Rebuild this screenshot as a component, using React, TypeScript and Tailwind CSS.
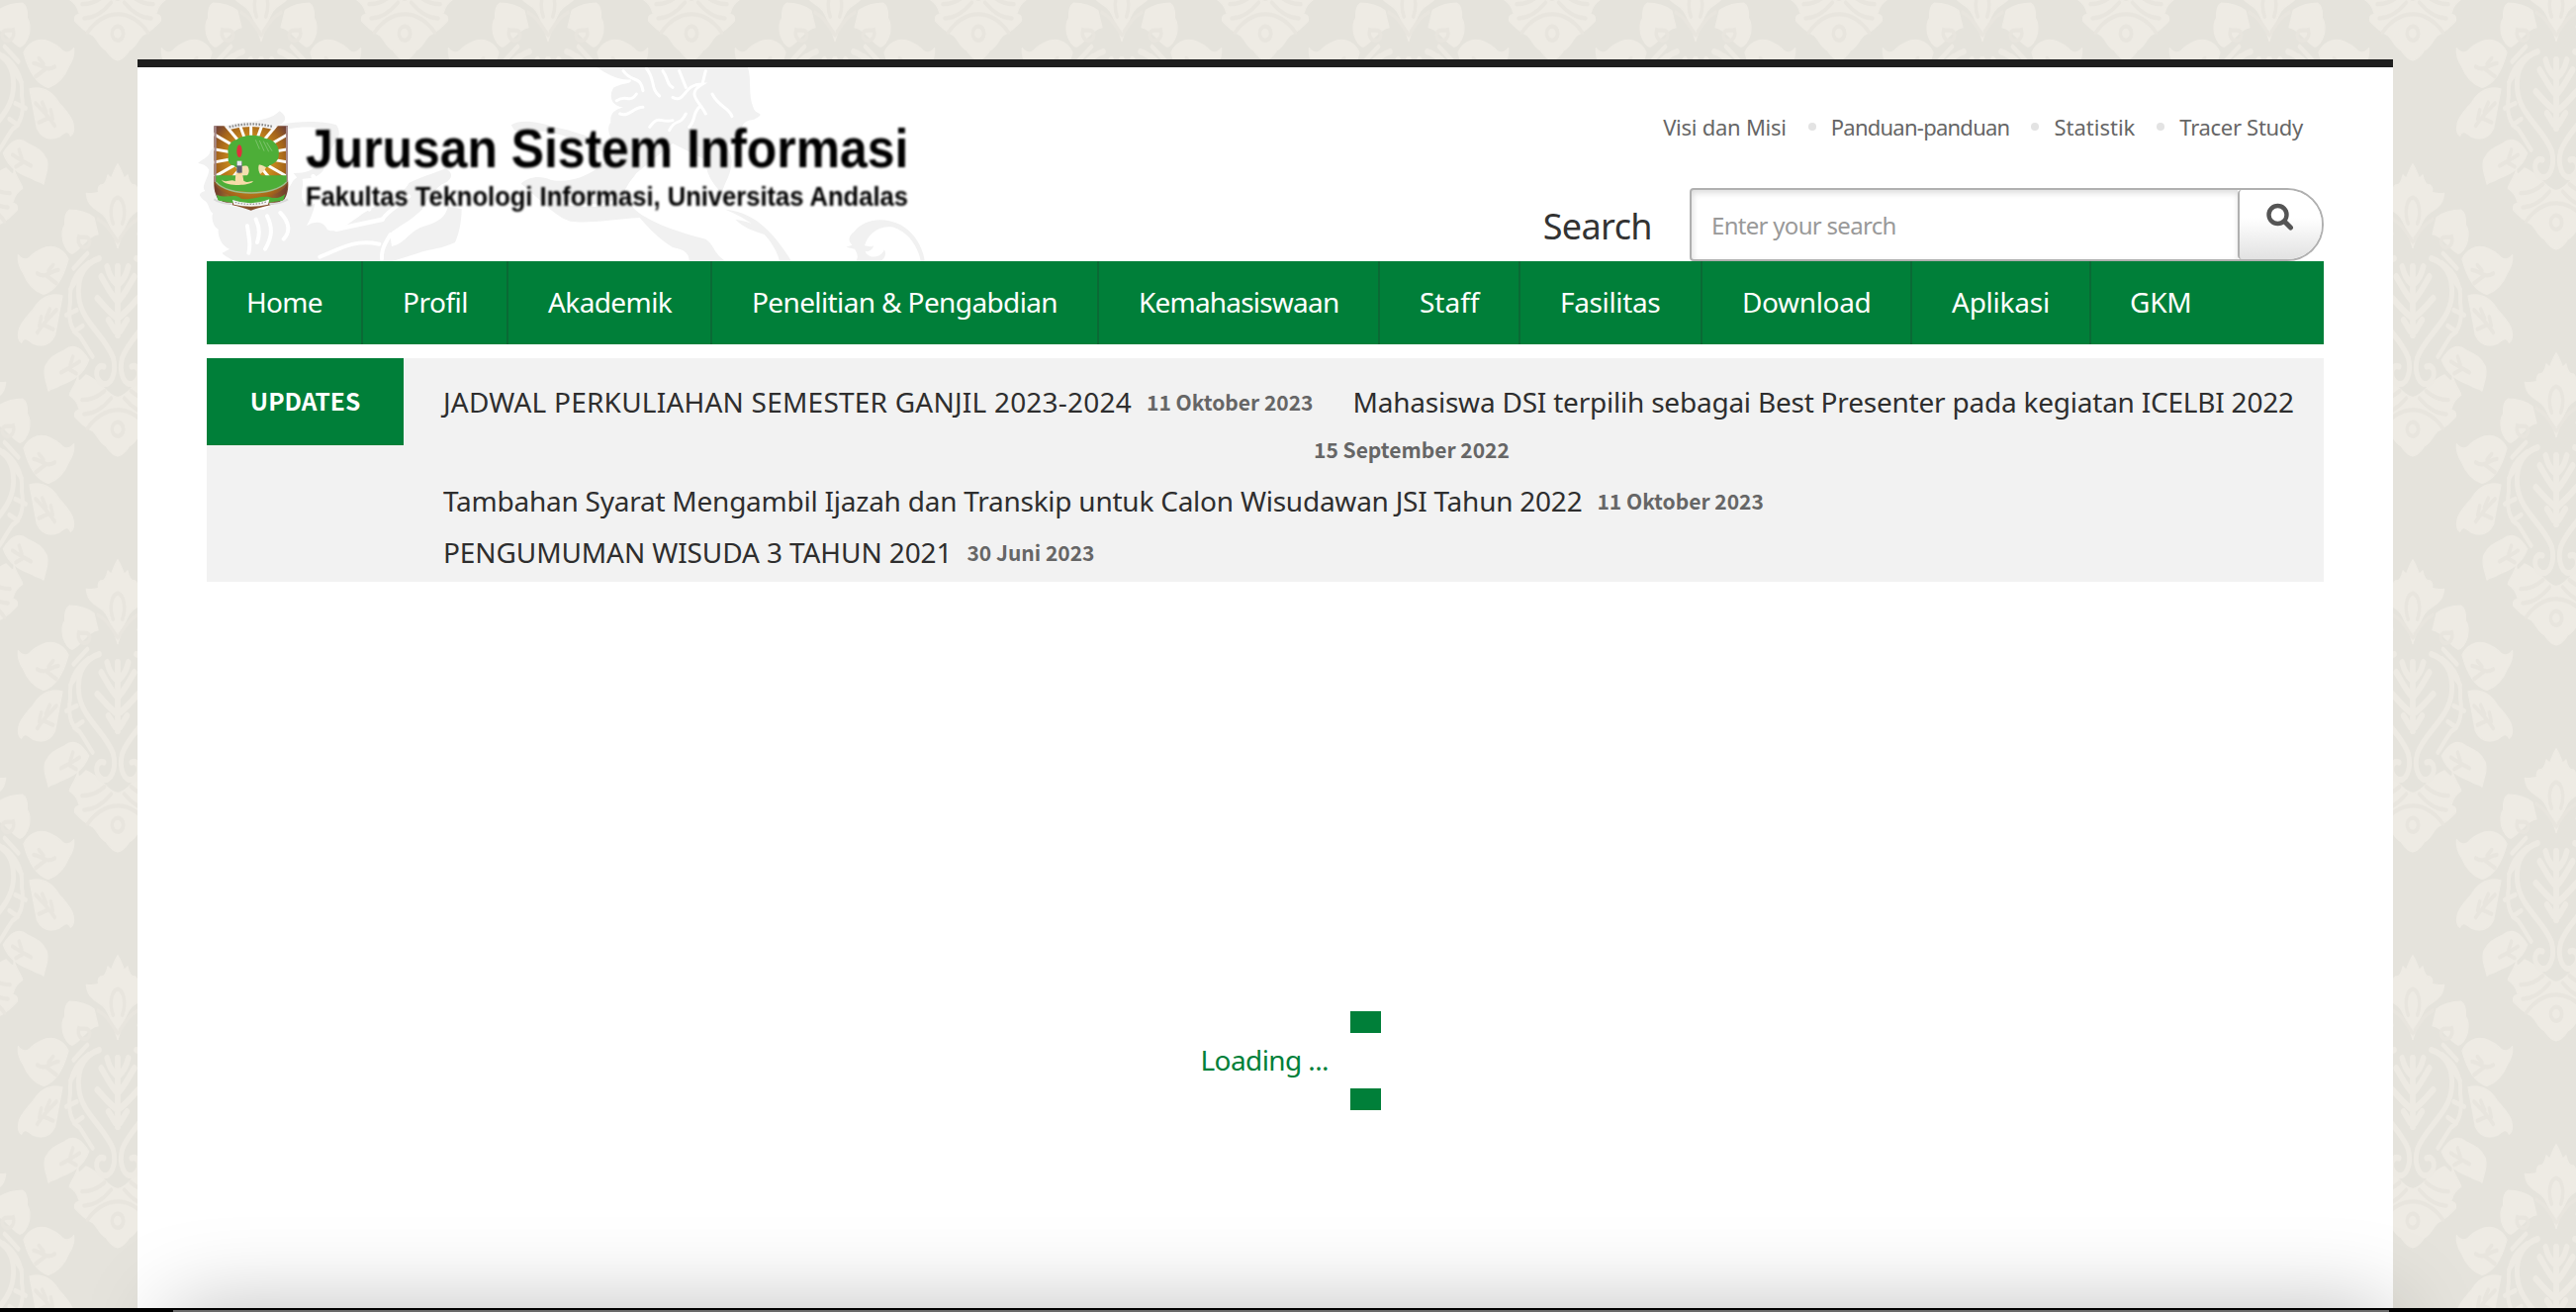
const NAV = [
  { label: "Home", cell: "w-[158px] tracking-[-0.7px]" },
  { label: "Profil", cell: "w-[147px] tracking-[-0.5px]" },
  { label: "Akademik", cell: "w-[206px] tracking-[-0.6px]" },
  { label: "Penelitian & Pengabdian", cell: "w-[391px] tracking-[-0.62px]" },
  { label: "Kemahasiswaan", cell: "w-[284px] tracking-[-0.8px]" },
  { label: "Staff", cell: "w-[142px]" },
  { label: "Fasilitas", cell: "w-[184px] tracking-[-0.35px]" },
  { label: "Download", cell: "w-[212px] tracking-[-0.35px]" },
  { label: "Aplikasi", cell: "w-[181px] tracking-[-0.25px]" },
];

function MotifHalf() {
  return (
    <g>
      <g fill="#eeebe4" stroke="#eeebe4" strokeWidth="4" strokeLinejoin="round">
        <path d="M0 0C8 8 13 22 20 34L30 26C34 42 40 52 52 50C60 54 60 62 58 68C66 70 76 72 95 70C93 84 88 94 78 100C66 112 50 112 36 128C24 142 14 165 0 200Z" />
        <path d="M72 128C92 116 118 110 146 110C158 116 162 128 160 146C168 154 170 166 166 184C158 204 150 212 138 214C118 210 90 170 60 168Z" />
        <path d="M150 228C162 206 190 194 218 200C240 206 256 214 270 226C284 232 294 226 302 218C304 236 296 250 286 262C276 282 256 302 226 312C196 306 168 282 150 228Z" />
        <path d="M168 316C200 310 232 318 256 348C274 366 296 382 300 400C304 416 300 424 292 428C284 412 274 420 258 430C232 438 206 436 190 410Z" />
        <path d="M88 470C110 440 136 430 160 446C186 456 206 462 220 486C226 510 216 520 210 544C200 536 190 540 174 530C140 520 104 506 88 470Z" />
        <path d="M0 560C30 558 50 520 96 506C114 520 122 528 120 506C126 530 146 546 146 554C134 562 124 566 116 590C128 592 132 596 130 606C114 620 92 634 76 640C60 652 56 668 36 676C24 690 12 700 0 700Z" />
      </g>
      <g fill="none" stroke="#e8e5de" strokeWidth="10" strokeLinecap="round">
        <path d="M0 80C20 84 26 116 14 142M0 186C20 166 28 146 60 132" />
        <path d="M84 186C90 168 106 178 118 174C124 190 112 200 100 200Q86 200 84 186" />
        <path d="M180 254C206 256 216 276 244 262M196 242L210 256M186 286L216 268" />
        <path d="M186 350C208 368 222 378 244 404M206 348L218 370M196 396L224 386M232 366L238 388" />
        <path d="M116 474C134 484 150 490 172 500M136 462L144 482M126 502L148 492" />
        <path d="M0 590C40 590 70 610 92 634M20 562C50 590 76 600 102 600M40 544C64 562 86 566 108 566" />
        <circle cx="0" cy="636" r="17" />
      </g>
      <g fill="none" stroke="#edeae3" strokeWidth="15" strokeLinecap="round">
        <path d="M56 226C96 236 124 266 118 318C110 380 40 410 14 464C2 500 20 536 48 526C74 512 66 478 42 486" />
        <path d="M88 236C130 260 148 290 144 330C152 370 142 400 116 412C100 430 88 448 76 462" strokeWidth="12" />
        <path d="M92 214L134 250M104 258L144 300M124 350L156 362M106 388L132 402" strokeWidth="12" />
        <path d="M0 246V410M0 330C24 310 34 290 50 270M0 290C20 276 26 264 32 246M0 370C26 356 40 340 62 322M8 400L28 374" strokeWidth="17" />
      </g>
    </g>
  );
}

function Motif() {
  return (
    <g transform="scale(0.3333 0.4209)">
      <MotifHalf />
      <g transform="scale(-1 1)">
        <MotifHalf />
      </g>
    </g>
  );
}

function Damask() {
  return (
    <svg className="absolute inset-0 h-full w-full" aria-hidden="true">
      <defs>
        <pattern id="damask" width="290" height="400" patternUnits="userSpaceOnUse">
          <rect width="290" height="400" fill="#e5e3dc" />
          <g transform="translate(119 -234)"><Motif /></g>
          <g transform="translate(119 166)"><Motif /></g>
          <g transform="translate(264 -43)"><Motif /></g>
          <g transform="translate(264 357)"><Motif /></g>
          <g transform="translate(-26 -43)"><Motif /></g>
          <g transform="translate(-26 357)"><Motif /></g>
        </pattern>
      </defs>
      <rect width="100%" height="100%" fill="url(#damask)" />
    </svg>
  );
}

function Watermark() {
  return (
    <svg className="absolute top-0 -left-[9px] h-[196px] w-[750px]" viewBox="0 9 2250 588" aria-hidden="true">
      <g fill="#f1f1f1">
        <path d="M130 185C160 168 215 175 248 142C275 160 266 176 244 184C310 170 380 172 420 184C432 200 430 222 420 232C400 262 396 280 380 322C360 350 330 344 306 350L290 330C330 330 350 322 360 300C372 270 396 246 404 204C380 190 320 186 276 196Z" />
        <path d="M0 300C20 284 36 280 38 262C50 250 60 238 62 250L62 380L100 430L200 440C240 420 260 404 290 352C310 330 324 340 316 380C310 420 330 440 356 420C350 450 340 470 330 490C360 470 384 480 392 500C420 520 470 470 520 440C560 420 620 400 640 360C680 340 720 330 750 316C780 330 770 352 740 364C720 380 700 400 680 440C640 480 600 494 582 514L588 552C630 544 640 504 690 490C730 478 752 462 758 432L800 438C800 480 790 520 780 540C740 560 700 560 660 575L590 597H110C104 590 76 580 74 572L96 560C70 550 60 520 62 500C44 490 40 460 46 452C30 440 36 420 16 410C0 396 4 390 22 384C8 370 30 350 34 320C26 306 14 302 0 300Z" />
        <path d="M950 184C980 164 1040 176 1080 190C1130 200 1200 220 1250 250L1236 270C1180 240 1120 216 1060 204L960 200Z" />
        <path d="M980 362C1000 340 1040 336 1070 350C1160 370 1240 300 1290 250C1240 230 1240 190 1252 176C1250 150 1260 140 1290 130C1250 126 1246 90 1262 70C1290 54 1320 60 1312 46C1280 50 1240 30 1210 9H1668C1680 50 1668 90 1684 130C1690 150 1706 146 1706 154C1690 176 1660 160 1650 190L1600 250C1630 280 1620 320 1600 360L1588 390C1560 360 1540 330 1540 290L1440 240L1330 330C1300 370 1280 390 1310 420C1330 460 1420 500 1540 530C1570 550 1560 570 1600 597H1490C1490 570 1470 560 1440 555C1400 530 1370 500 1340 465C1260 470 1180 484 1130 476C1080 460 1040 410 980 362Z" />
        <path d="M1600 440C1680 446 1740 500 1800 597H1764C1750 540 1700 480 1600 440ZM1630 470C1690 480 1720 500 1732 520C1700 510 1660 500 1630 470Z" />
        <path d="M1966 554L1984 548C1970 534 1974 520 1990 508C2020 468 2080 462 2130 486C2176 510 2200 560 2204 597H2192C2186 560 2160 510 2110 494C2060 486 2030 520 2022 550C2030 550 2040 556 2050 550C2044 566 2030 570 2024 566C2030 590 2070 590 2082 562C2090 580 2080 590 2070 597H1996C2004 584 2000 574 1992 560Z" />
      </g>
      <g fill="none" stroke="#ffffff" strokeLinecap="round">
        <path strokeWidth="12" d="M150 490C156 530 160 550 154 572M210 460C230 500 222 530 204 560M250 450C280 480 280 510 260 530M176 470C190 500 186 520 180 540M370 584C430 560 470 530 550 545M584 516C570 540 556 560 558 590M360 420C400 430 470 390 520 440M640 400C610 430 580 440 560 470" />
        <path strokeWidth="14" d="M350 340C360 370 390 380 400 350M480 430L620 360M420 500L560 470" />
        <path strokeWidth="9" d="M1290 20C1320 60 1340 30 1350 80M1360 12C1390 50 1370 70 1400 96M1410 20C1430 50 1420 60 1440 70M1440 100C1480 120 1470 60 1530 60C1480 90 1520 110 1540 150M1560 90C1580 130 1610 130 1620 158M1440 170C1400 180 1400 150 1370 190M1430 200C1450 160 1460 190 1480 150M1490 190C1510 170 1500 150 1520 130M1270 110C1300 90 1310 120 1330 90M1280 150C1310 160 1320 130 1350 130M1460 20L1480 70M1540 20L1530 60M1300 380C1350 350 1400 340 1470 300M1320 400C1400 400 1450 380 1510 350M1420 460C1460 470 1520 450 1550 430M1110 420C1200 440 1260 420 1310 400" />
      </g>
    </svg>
  );
}

const RAYS = [0, 20, 40, 60, 80, 100, 120, 140, 160, 180, 200, 220, 240, 260, 280, 300, 320, 340];

function Emblem() {
  return (
    <svg className="absolute top-[54px] left-[6px] h-[92px] w-[77px] blur-[0.5px]" viewBox="44 54 231 276" aria-hidden="true">
      <defs>
        <radialGradient id="sun" cx="50%" cy="42%" r="62%">
          <stop offset="0.45" stopColor="#c98a1c" />
          <stop offset="0.75" stopColor="#a5651a" />
          <stop offset="1" stopColor="#6e4038" />
        </radialGradient>
        <linearGradient id="band" x1="0" x2="1">
          <stop offset="0" stopColor="#6e3a2c" />
          <stop offset="0.3" stopColor="#b98a2a" />
          <stop offset="0.5" stopColor="#c98f22" />
          <stop offset="0.7" stopColor="#a5702a" />
          <stop offset="1" stopColor="#6e3a2c" />
        </linearGradient>
        <clipPath id="shield"><path d="M48 70H272V222H48Z" /></clipPath>
      </defs>
      <path d="M48 70H272V232C276 262 268 282 262 292C236 310 200 312 160 326C120 312 84 308 60 292C52 276 46 262 48 232Z" fill="url(#sun)" />
      <g clipPath="url(#shield)" stroke="#fffdf6" strokeWidth="9">
        {RAYS.map((a) => (
          <line key={a} x1="160" y1="160" x2="160" y2="-10" transform={`rotate(${a} 160 160)`} />
        ))}
      </g>
      <path d="M52 70V240M269 70V240" stroke="#a58a8c" strokeWidth="6" />
      <ellipse cx="160" cy="176" rx="50" ry="48" fill="#f3dfb0" />
      <path d="M92 160C86 136 96 116 116 112C136 94 184 94 204 108C232 110 248 134 244 158C244 180 226 184 216 190C208 204 196 184 184 188C180 204 186 214 194 224H146C156 212 156 202 150 192C132 186 120 204 108 190C94 188 88 176 92 160Z" fill="#4dae38" />
      <path d="M174 112L186 140M186 114L200 146M198 116L214 148M208 120L224 146" stroke="#7cc46c" strokeWidth="3" />
      <path d="M54 220H268V240C240 280 80 280 54 240Z" fill="#4dae38" />
      <path d="M54 240C90 284 230 284 268 240" fill="none" stroke="#9bbf8e" strokeWidth="4" />
      <path d="M50 246C60 262 74 272 92 278L98 294C76 292 62 282 52 270ZM270 246C260 262 246 272 228 278L222 294C244 292 258 282 268 270Z" fill="url(#band)" />
      <path d="M56 278C90 292 110 272 130 290C160 298 190 276 226 288C246 290 256 282 264 276L258 296C220 300 200 306 160 308C120 306 90 300 60 296Z" fill="#4dae38" />
      <path d="M70 232C84 246 100 228 112 238L114 214H134L138 236C150 244 160 236 168 238C152 252 112 250 92 246C80 244 74 240 70 232Z" fill="#f6dca8" />
      <rect x="117" y="178" width="16" height="34" fill="#5c5f70" />
      <path d="M118 176H132V190H118Z" fill="#e8e8ee" />
      <ellipse cx="125" cy="146" rx="8" ry="19" fill="#e0303c" />
      <path d="M82 70Q160 44 238 68L232 82Q160 62 92 82Z" fill="#f4f4f4" />
      <path d="M94 73Q160 56 226 72" fill="none" stroke="#8d8d8d" strokeWidth="7" strokeDasharray="5 4" />
      <path d="M104 294Q160 314 216 292L212 308Q160 320 108 308Z" fill="#f7f7f7" />
      <path d="M112 301Q160 314 208 300" fill="none" stroke="#9a9a9a" strokeWidth="4" strokeDasharray="5 4" />
      <path d="M48 292Q70 306 104 306M272 292Q250 306 216 306" fill="none" stroke="#d9d9d9" strokeWidth="6" />
    </svg>
  );
}

function Dot() {
  return <span className="mr-[15px] ml-[22px] size-2 rounded-full bg-[#e3e3e3]" />;
}

function PostDate({ children }: { children: string }) {
  return <b className="ml-[15px] font-['Noto_Sans_CJK_SC',sans-serif] text-[21px] text-[#666]">{children}</b>;
}

export default function App() {
  return (
    <div className="relative h-[1326px] w-[2604px] overflow-hidden bg-[#e5e3dc] font-['Noto_Sans',sans-serif] text-[#2e2e2e]">
      <Damask />
      <main className="relative mt-[60px] ml-[139px] h-[1266px] w-[2280px] border-t-8 border-[#1e1e1e] bg-white px-[70px]">
        <header className="relative flex h-[196px] justify-between">
          <Watermark />
          <div className="relative h-[146px] w-[712px] font-['Liberation_Sans',Arial,sans-serif] font-bold whitespace-nowrap text-black">
            <Emblem />
            <div className="pt-[51px] pl-[100px] blur-[0.8px]">
              <div className="w-max origin-left scale-x-[0.906] text-[55px] leading-[62px]">Jurusan Sistem Informasi</div>
              <div className="w-max origin-left scale-x-[0.946] text-[27px] leading-[37px]">Fakultas Teknologi Informasi, Universitas Andalas</div>
            </div>
          </div>
          <div className="relative flex flex-col items-end">
            <div className="mt-[42px] mr-[21px] flex h-[36px] items-center text-[22px] text-[#666]">
              <span className="tracking-[-0.25px]">Visi dan Misi</span>
              <Dot />
              <span className="tracking-[-0.75px]">Panduan-panduan</span>
              <Dot />
              <span>Statistik</span>
              <Dot />
              <span className="tracking-[-0.3px]">Tracer Study</span>
            </div>
            <div className="mt-[44px] flex h-[74px] items-center">
              <span className="mr-[38px] pt-[3px] text-[36px] leading-[74px] tracking-[-0.6px] text-[#333]">Search</span>
              <div className="flex h-[74px] w-[641px] overflow-hidden rounded-l-[4px] rounded-r-[37px] border-2 border-[#b0b0b0] bg-white">
                <div className="flex-1 pl-[20px] text-[24px] leading-[71px] tracking-[-0.7px] text-[#999] shadow-[inset_1px_3px_6px_rgba(0,0,0,0.14)]">Enter your search</div>
                <div className="w-[85px] rounded-l-[4px] border-l-2 border-[#b0b0b0] bg-linear-to-b from-white from-40% to-[#e2e2e2] pt-[13px] pl-[26px]">
                  <svg className="size-[29px]" viewBox="0 0 29 29" fill="none" stroke="#555" strokeLinecap="round">
                    <circle cx="12.5" cy="12" r="9" strokeWidth="4.4" />
                    <path d="M19.5 19L25.5 25" strokeWidth="5" />
                  </svg>
                </div>
              </div>
            </div>
          </div>
        </header>

        <nav className="flex h-[84px] bg-[#007f39] text-[28px] leading-[83px] whitespace-nowrap text-white">
          {NAV.map((n) => (
            <a key={n.label} className={`${n.cell} shrink-0 border-r-2 border-[#0a6a35] pl-[40px]`}>{n.label}</a>
          ))}
          <a className="pl-[39px] tracking-[-0.2px]">GKM</a>
        </nav>

        <section className="mt-[14px] flex h-[226px] items-start bg-[#f2f2f2] whitespace-nowrap">
          <div className="h-[88px] w-[199px] shrink-0 bg-[#007f39] text-center font-['Noto_Sans_CJK_SC',sans-serif] text-[24.5px] leading-[86px] font-bold text-white">UPDATES</div>
          <div className="pt-[18px] pl-[40px] text-[28px] leading-[52px]">
            <div className="flex">
              <span className="tracking-[0.22px]">JADWAL PERKULIAHAN SEMESTER GANJIL 2023-2024</span>
              <PostDate>11 Oktober 2023</PostDate>
              <span className="ml-[40px] tracking-[-0.22px]">Mahasiswa DSI terpilih sebagai Best Presenter pada kegiatan ICELBI 2022</span>
            </div>
            <div className="h-[48px] pl-[880px] font-['Noto_Sans_CJK_SC',sans-serif] text-[21px] leading-[44px] font-bold text-[#666]">15 September 2022</div>
            <div className="flex">
              <span className="tracking-[-0.24px]">Tambahan Syarat Mengambil Ijazah dan Transkip untuk Calon Wisudawan JSI Tahun 2022</span>
              <PostDate>11 Oktober 2023</PostDate>
            </div>
            <div className="flex">
              <span className="tracking-[-0.1px]">PENGUMUMAN WISUDA 3 TAHUN 2021</span>
              <PostDate>30 Juni 2023</PostDate>
            </div>
          </div>
        </section>

        <div className="mt-[434px] flex h-[100px] w-[1187px] items-center justify-end gap-[22px] text-[28px] text-[#007f39]">
          <span className="-mt-0.5 tracking-[-0.6px]">Loading ...</span>
          <div className="flex h-[100px] w-[31px] flex-col justify-between">
            <i className="h-[22px] bg-[#007f39]" />
            <i className="h-[22px] bg-[#007f39]" />
          </div>
        </div>
      </main>
      <div className="absolute right-[189px] -bottom-[198px] left-[175px] h-[200px] shadow-[0_0_90px_rgba(0,0,0,0.27)]" />
      <div className="absolute inset-x-0 bottom-0 h-1 bg-black" />
      <div className="absolute right-[189px] bottom-0 left-[175px] h-[2px] bg-[#6b6b6b]" />
    </div>
  );
}
